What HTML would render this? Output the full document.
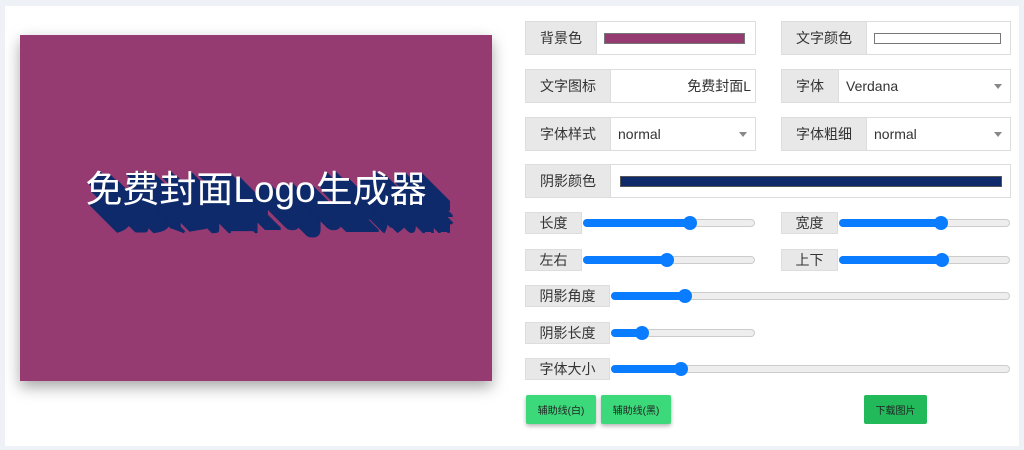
<!DOCTYPE html>
<html><head><meta charset="utf-8"><style>
*{box-sizing:border-box;margin:0;padding:0}
body{width:1024px;height:450px;background:#eef2f7;font-family:"Liberation Sans","Noto Sans CJK SC",sans-serif;position:relative;overflow:hidden;color:#333}
.panel{position:absolute;left:5px;top:6px;width:1014px;height:440px;background:#fff}
.canvas{position:absolute;left:20px;top:35px;width:472px;height:346px;background:#963b72;box-shadow:0 6px 14px rgba(0,0,0,.35)}
.t{position:absolute;left:0;width:472px;top:134px;text-align:center;color:#fff;font-size:37px;line-height:42px;letter-spacing:0;
text-shadow:1px 1px #0f2a6a,2px 2px #0f2a6a,3px 3px #0f2a6a,4px 4px #0f2a6a,5px 5px #0f2a6a,6px 6px #0f2a6a,7px 7px #0f2a6a,8px 8px #0f2a6a,9px 9px #0f2a6a,10px 10px #0f2a6a,11px 11px #0f2a6a,12px 12px #0f2a6a,13px 13px #0f2a6a,14px 14px #0f2a6a,15px 15px #0f2a6a,16px 16px #0f2a6a,17px 17px #0f2a6a,18px 18px #0f2a6a,19px 19px #0f2a6a,20px 20px #0f2a6a,21px 21px #0f2a6a,22px 22px #0f2a6a,23px 23px #0f2a6a,24px 24px #0f2a6a,25px 25px #0f2a6a,26px 26px #0f2a6a,27px 27px #0f2a6a,28px 28px #0f2a6a}
.row{position:absolute;height:34px;border:1px solid #ddd;display:flex;background:#fff}
.lab{background:#e8e8e8;border-right:1px solid #ddd;font-size:14px;display:flex;align-items:center;justify-content:center;color:#333}
.inp{flex:1;display:flex;align-items:center;font-size:14px;padding:0 7px;position:relative}
.arr{position:absolute;right:8px;top:14px;border:4px solid transparent;border-top:5px solid #888;border-bottom:0}
.sl{position:absolute;height:22px}
.sl .lab{position:absolute;left:0;top:0;height:22px;border:1px solid #ddd;font-size:14px}
.tr{position:absolute;height:8px;top:7px;border-radius:4px;background:#eee;border:1px solid #ccc}
.fill{position:absolute;left:-1px;top:-1px;height:8px;border-radius:4px;background:#0a7cff}
.th{position:absolute;top:-4px;width:14px;height:14px;border-radius:50%;background:#0a7cff;margin-left:-7px}
.btn{position:absolute;top:395px;height:29px;background:#3bd97a;font-size:10px;display:flex;align-items:center;justify-content:center;color:#222;border-radius:2px;box-shadow:0 2px 4px rgba(0,0,0,.3)}
</style></head><body>
<div class="panel"></div>
<div class="canvas"><div class="t">免费封面Logo生成器</div></div>

<div class="row" style="left:525px;top:21px;width:231px"><div class="lab" style="width:71px">背景色</div><div class="inp"><div style="width:141px;height:11px;background:#963b72;border:1px solid #777"></div></div></div>
<div class="row" style="left:781px;top:21px;width:230px"><div class="lab" style="width:85px">文字颜色</div><div class="inp"><div style="width:127px;height:11px;background:#fff;border:1px solid #777"></div></div></div>

<div class="row" style="left:525px;top:69px;width:231px"><div class="lab" style="width:85px">文字图标</div><div class="inp" style="justify-content:flex-end;padding-right:4px">免费封面L</div></div>
<div class="row" style="left:781px;top:69px;width:230px"><div class="lab" style="width:57px">字体</div><div class="inp">Verdana<span class="arr"></span></div></div>

<div class="row" style="left:525px;top:117px;width:231px"><div class="lab" style="width:85px">字体样式</div><div class="inp">normal<span class="arr"></span></div></div>
<div class="row" style="left:781px;top:117px;width:230px"><div class="lab" style="width:85px">字体粗细</div><div class="inp">normal<span class="arr"></span></div></div>

<div class="row" style="left:525px;top:164px;width:486px"><div class="lab" style="width:85px">阴影颜色</div><div class="inp" style="padding-left:9px"><div style="width:382px;height:11px;background:#0f2a6a;border:1px solid #555"></div></div></div>

<div class="sl" style="left:525px;top:212px;width:230px"><div class="lab" style="width:57px">长度</div><div class="tr" style="left:58px;width:172px"><div class="fill" style="width:107px"></div><div class="th" style="left:106px"></div></div></div>
<div class="sl" style="left:781px;top:212px;width:230px"><div class="lab" style="width:57px">宽度</div><div class="tr" style="left:58px;width:171px"><div class="fill" style="width:102px"></div><div class="th" style="left:101px"></div></div></div>
<div class="sl" style="left:525px;top:249px;width:230px"><div class="lab" style="width:57px">左右</div><div class="tr" style="left:58px;width:172px"><div class="fill" style="width:84px"></div><div class="th" style="left:83px"></div></div></div>
<div class="sl" style="left:781px;top:249px;width:230px"><div class="lab" style="width:57px">上下</div><div class="tr" style="left:58px;width:171px"><div class="fill" style="width:103px"></div><div class="th" style="left:102px"></div></div></div>
<div class="sl" style="left:525px;top:285px;width:486px"><div class="lab" style="width:85px">阴影角度</div><div class="tr" style="left:86px;width:399px"><div class="fill" style="width:74px"></div><div class="th" style="left:73px"></div></div></div>
<div class="sl" style="left:525px;top:322px;width:230px"><div class="lab" style="width:85px">阴影长度</div><div class="tr" style="left:86px;width:144px"><div class="fill" style="width:31px"></div><div class="th" style="left:30px"></div></div></div>
<div class="sl" style="left:525px;top:358px;width:486px"><div class="lab" style="width:85px">字体大小</div><div class="tr" style="left:86px;width:399px"><div class="fill" style="width:70px"></div><div class="th" style="left:69px"></div></div></div>

<div class="btn" style="left:526px;width:70px">辅助线(白)</div>
<div class="btn" style="left:601px;width:70px">辅助线(黑)</div>
<div class="btn" style="left:864px;width:63px;background:#21b95a;box-shadow:none">下载图片</div>
</body></html>
